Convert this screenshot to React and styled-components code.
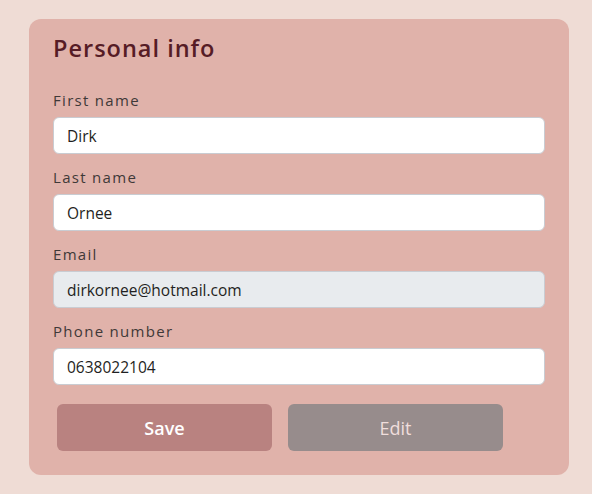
import React from 'react';
import styled, { createGlobalStyle } from 'styled-components';

const GlobalStyle = createGlobalStyle`
  html, body {
    margin: 0;
    padding: 0;
    background-color: #EFDCD5;
  }
  body {
    font-family: "Open Sans", "Noto Sans", sans-serif;
  }
`;

const Page = styled.div`
  padding: 19px 23px 19px 29px;
`;

const Card = styled.form`
  width: 540px;
  box-sizing: border-box;
  background-color: #E0B2AA;
  border-radius: 12px;
  padding: 14px 24px 24px 24px;
  display: flex;
  flex-direction: column;
`;

const Title = styled.h2`
  margin: 0 0 26px 0;
  font-size: 23.5px;
  line-height: 30px;
  font-weight: 600;
  letter-spacing: 1px;
  color: #561C26;
`;

const Fields = styled.div`
  display: flex;
  flex-direction: column;
  gap: 12px;
`;

const Field = styled.div`
  display: flex;
  flex-direction: column;
`;

const Label = styled.label`
  font-size: 15px;
  line-height: 22px;
  letter-spacing: 1.3px;
  color: #3F3938;
  margin-bottom: 6px;
`;

const Input = styled.input`
  box-sizing: border-box;
  height: 37px;
  width: 100%;
  border: 1px solid #C9CCD2;
  border-radius: 6px;
  padding: 0 13px;
  font-family: inherit;
  font-size: 15.5px;
  color: #1F1F22;
  background-color: ${(p) => (p.disabled ? '#E8EBEE' : '#FFFFFF')};
  outline: none;
`;

const Actions = styled.div`
  display: flex;
  gap: 16px;
  margin-top: 19px;
  padding-left: 4px;
`;

const Button = styled.button`
  width: 215px;
  height: 47px;
  border: none;
  border-radius: 6px;
  font-family: inherit;
  font-size: 18px;
  font-weight: ${(p) => (p.$primary ? 600 : 500)};
  color: ${(p) => (p.$primary ? '#FFFFFF' : '#F0DEDC')};
  background-color: ${(p) => (p.$primary ? '#B98280' : '#978C8C')};
  cursor: pointer;
`;

const fields = [
  { id: 'first', label: 'First name', value: 'Dirk' },
  { id: 'last', label: 'Last name', value: 'Ornee' },
  { id: 'email', label: 'Email', value: 'dirkornee@hotmail.com', disabled: true },
  { id: 'phone', label: 'Phone number', value: '0638022104' },
];

export default function App() {
  return (
    <Page>
      <GlobalStyle />
      <Card onSubmit={(e) => e.preventDefault()}>
        <Title>Personal info</Title>
        <Fields>
          {fields.map((f) => (
            <Field key={f.id}>
              <Label htmlFor={f.id}>{f.label}</Label>
              <Input id={f.id} defaultValue={f.value} disabled={f.disabled} />
            </Field>
          ))}
        </Fields>
        <Actions>
          <Button type="submit" $primary>Save</Button>
          <Button type="button">Edit</Button>
        </Actions>
      </Card>
    </Page>
  );
}
